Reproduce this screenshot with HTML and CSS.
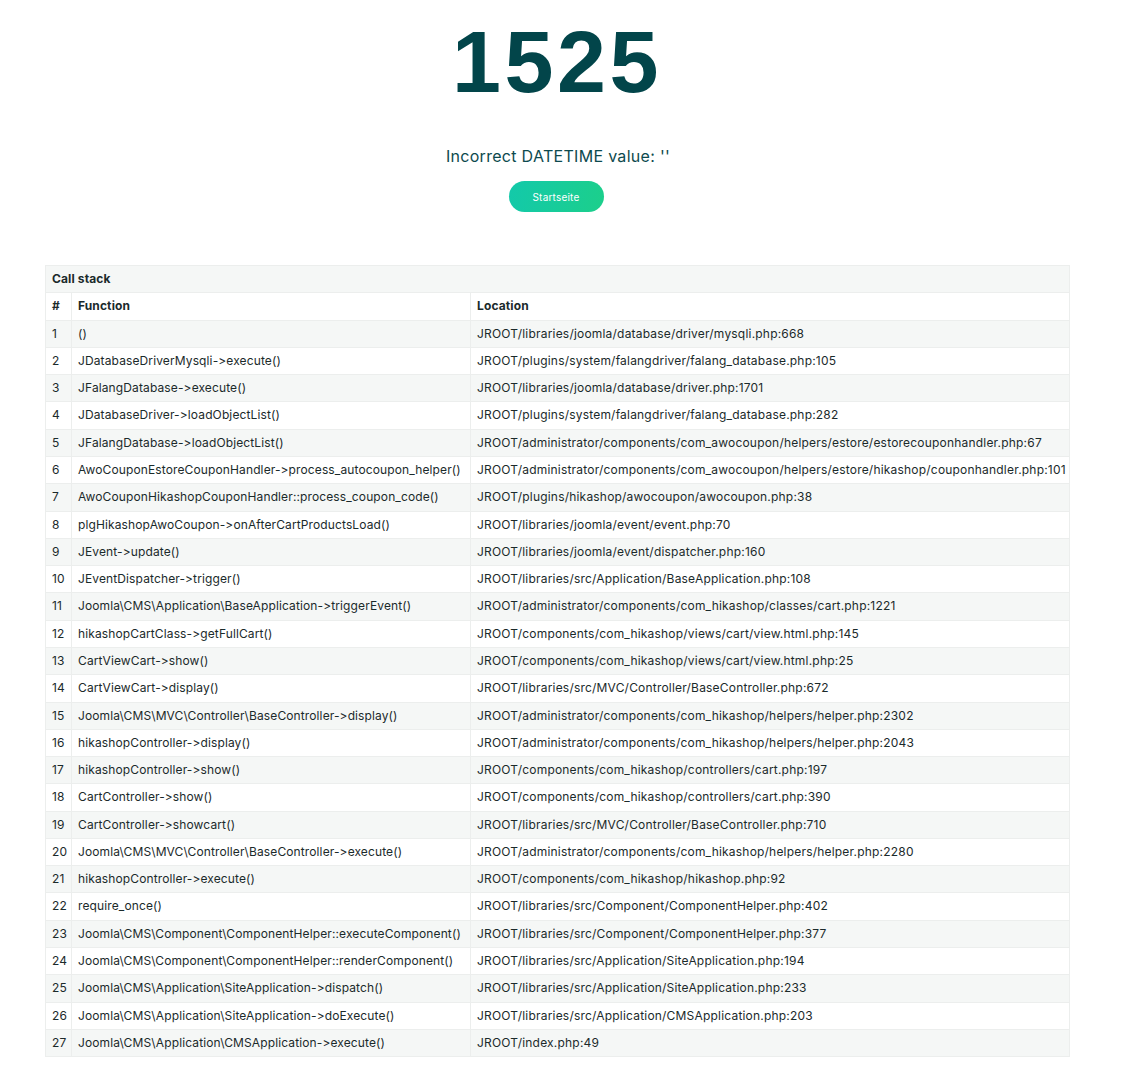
FILE: index.html
```html
<!DOCTYPE html>
<html lang="de">
<head>
<meta charset="utf-8">
<title>1525 - Error</title>
<link rel="stylesheet" href="styles.css">
</head>
<body>
<div class="error-page">
  <h1 class="error-code">1525</h1>
  <p class="error-message">Incorrect DATETIME value: ''</p>
  <a class="btn-home" href="#">Startseite</a>
</div>
<div class="stack-wrap">
<table class="stack">
  <colgroup><col class="c-num"><col class="c-fn"><col class="c-loc"></colgroup>
  <thead>
    <tr class="caption-row"><th colspan="3">Call stack</th></tr>
    <tr class="head-row"><th>#</th><th>Function</th><th>Location</th></tr>
  </thead>
  <tbody>
    <tr><td>1</td><td>()</td><td>JROOT/libraries/joomla/database/driver/mysqli.php:668</td></tr>
    <tr><td>2</td><td>JDatabaseDriverMysqli-&gt;execute()</td><td>JROOT/plugins/system/falangdriver/falang_database.php:105</td></tr>
    <tr><td>3</td><td>JFalangDatabase-&gt;execute()</td><td>JROOT/libraries/joomla/database/driver.php:1701</td></tr>
    <tr><td>4</td><td>JDatabaseDriver-&gt;loadObjectList()</td><td>JROOT/plugins/system/falangdriver/falang_database.php:282</td></tr>
    <tr><td>5</td><td>JFalangDatabase-&gt;loadObjectList()</td><td>JROOT/administrator/components/com_awocoupon/helpers/estore/estorecouponhandler.php:67</td></tr>
    <tr><td>6</td><td>AwoCouponEstoreCouponHandler-&gt;process_autocoupon_helper()</td><td>JROOT/administrator/components/com_awocoupon/helpers/estore/hikashop/couponhandler.php:101</td></tr>
    <tr><td>7</td><td>AwoCouponHikashopCouponHandler::process_coupon_code()</td><td>JROOT/plugins/hikashop/awocoupon/awocoupon.php:38</td></tr>
    <tr><td>8</td><td>plgHikashopAwoCoupon-&gt;onAfterCartProductsLoad()</td><td>JROOT/libraries/joomla/event/event.php:70</td></tr>
    <tr><td>9</td><td>JEvent-&gt;update()</td><td>JROOT/libraries/joomla/event/dispatcher.php:160</td></tr>
    <tr><td>10</td><td>JEventDispatcher-&gt;trigger()</td><td>JROOT/libraries/src/Application/BaseApplication.php:108</td></tr>
    <tr><td>11</td><td>Joomla\CMS\Application\BaseApplication-&gt;triggerEvent()</td><td>JROOT/administrator/components/com_hikashop/classes/cart.php:1221</td></tr>
    <tr><td>12</td><td>hikashopCartClass-&gt;getFullCart()</td><td>JROOT/components/com_hikashop/views/cart/view.html.php:145</td></tr>
    <tr><td>13</td><td>CartViewCart-&gt;show()</td><td>JROOT/components/com_hikashop/views/cart/view.html.php:25</td></tr>
    <tr><td>14</td><td>CartViewCart-&gt;display()</td><td>JROOT/libraries/src/MVC/Controller/BaseController.php:672</td></tr>
    <tr><td>15</td><td>Joomla\CMS\MVC\Controller\BaseController-&gt;display()</td><td>JROOT/administrator/components/com_hikashop/helpers/helper.php:2302</td></tr>
    <tr><td>16</td><td>hikashopController-&gt;display()</td><td>JROOT/administrator/components/com_hikashop/helpers/helper.php:2043</td></tr>
    <tr><td>17</td><td>hikashopController-&gt;show()</td><td>JROOT/components/com_hikashop/controllers/cart.php:197</td></tr>
    <tr><td>18</td><td>CartController-&gt;show()</td><td>JROOT/components/com_hikashop/controllers/cart.php:390</td></tr>
    <tr><td>19</td><td>CartController-&gt;showcart()</td><td>JROOT/libraries/src/MVC/Controller/BaseController.php:710</td></tr>
    <tr><td>20</td><td>Joomla\CMS\MVC\Controller\BaseController-&gt;execute()</td><td>JROOT/administrator/components/com_hikashop/helpers/helper.php:2280</td></tr>
    <tr><td>21</td><td>hikashopController-&gt;execute()</td><td>JROOT/components/com_hikashop/hikashop.php:92</td></tr>
    <tr><td>22</td><td>require_once()</td><td>JROOT/libraries/src/Component/ComponentHelper.php:402</td></tr>
    <tr><td>23</td><td>Joomla\CMS\Component\ComponentHelper::executeComponent()</td><td>JROOT/libraries/src/Component/ComponentHelper.php:377</td></tr>
    <tr><td>24</td><td>Joomla\CMS\Component\ComponentHelper::renderComponent()</td><td>JROOT/libraries/src/Application/SiteApplication.php:194</td></tr>
    <tr><td>25</td><td>Joomla\CMS\Application\SiteApplication-&gt;dispatch()</td><td>JROOT/libraries/src/Application/SiteApplication.php:233</td></tr>
    <tr><td>26</td><td>Joomla\CMS\Application\SiteApplication-&gt;doExecute()</td><td>JROOT/libraries/src/Application/CMSApplication.php:203</td></tr>
    <tr><td>27</td><td>Joomla\CMS\Application\CMSApplication-&gt;execute()</td><td>JROOT/index.php:49</td></tr>
  </tbody>
</table>
</div>
</body>
</html>
```

FILE: styles.css
```css
html, body {
  margin: 0;
  padding: 0;
  background: #ffffff;
}
body {
  font-family: "Inter", "Liberation Sans", sans-serif;
  font-feature-settings: "calt" 0, "liga" 0;
  font-variant-ligatures: none;
  color: #1b2a2b;
  padding-right: 13px;
}
.error-page {
  display: flex;
  flex-direction: column;
  align-items: center;
  padding-top: 14px;
}
.error-code {
  margin: 0;
  font-family: "Liberation Sans", sans-serif;
  font-weight: 700;
  font-size: 88px;
  line-height: 96px;
  letter-spacing: 3.5px;
  padding-left: 2px;
  color: #02454a;
}
.error-message {
  margin: 36px 0 0;
  padding-left: 4px;
  font-size: 16px;
  line-height: 20px;
  letter-spacing: 0.3px;
  color: #0d4a4e;
}
.btn-home {
  margin-top: 15px;
  display: inline-flex;
  align-items: center;
  justify-content: center;
  width: 95px;
  height: 31px;
  border-radius: 16px;
  background: linear-gradient(100deg, #13c9aa 0%, #1ccf8b 100%);
  color: #ffffff;
  font-size: 10px;
  letter-spacing: 0.2px;
  text-decoration: none;
}
.stack-wrap {
  padding: 53px 0 20px 45px;
}
.stack {
  width: 1025px;
  table-layout: fixed;
  border-collapse: collapse;
  font-size: 12px;
  letter-spacing: 0.12px;
  border: 1px solid #eceeed;
}
.c-num { width: 26px; }
.c-fn { width: 399px; }
.stack th, .stack td {
  text-align: left;
  padding: 4px 7px 4px 6px;
  line-height: 18.28px;
  border-top: 1px solid #eceeed;
  vertical-align: middle;
  white-space: nowrap;
  overflow: hidden;
}
.stack td:last-child {
  letter-spacing: 0.2px;
}
.stack th + th, .stack td + td {
  border-left: 1px solid #eceeed;
}
.stack th {
  font-weight: 700;
}
.stack .caption-row th {
  background: #f5f7f6;
}
.stack td:first-child, .stack th:first-child {
  padding-left: 6px;
  padding-right: 0;
}
.stack tbody tr:nth-child(odd) td {
  background: #f5f7f6;
}
```
